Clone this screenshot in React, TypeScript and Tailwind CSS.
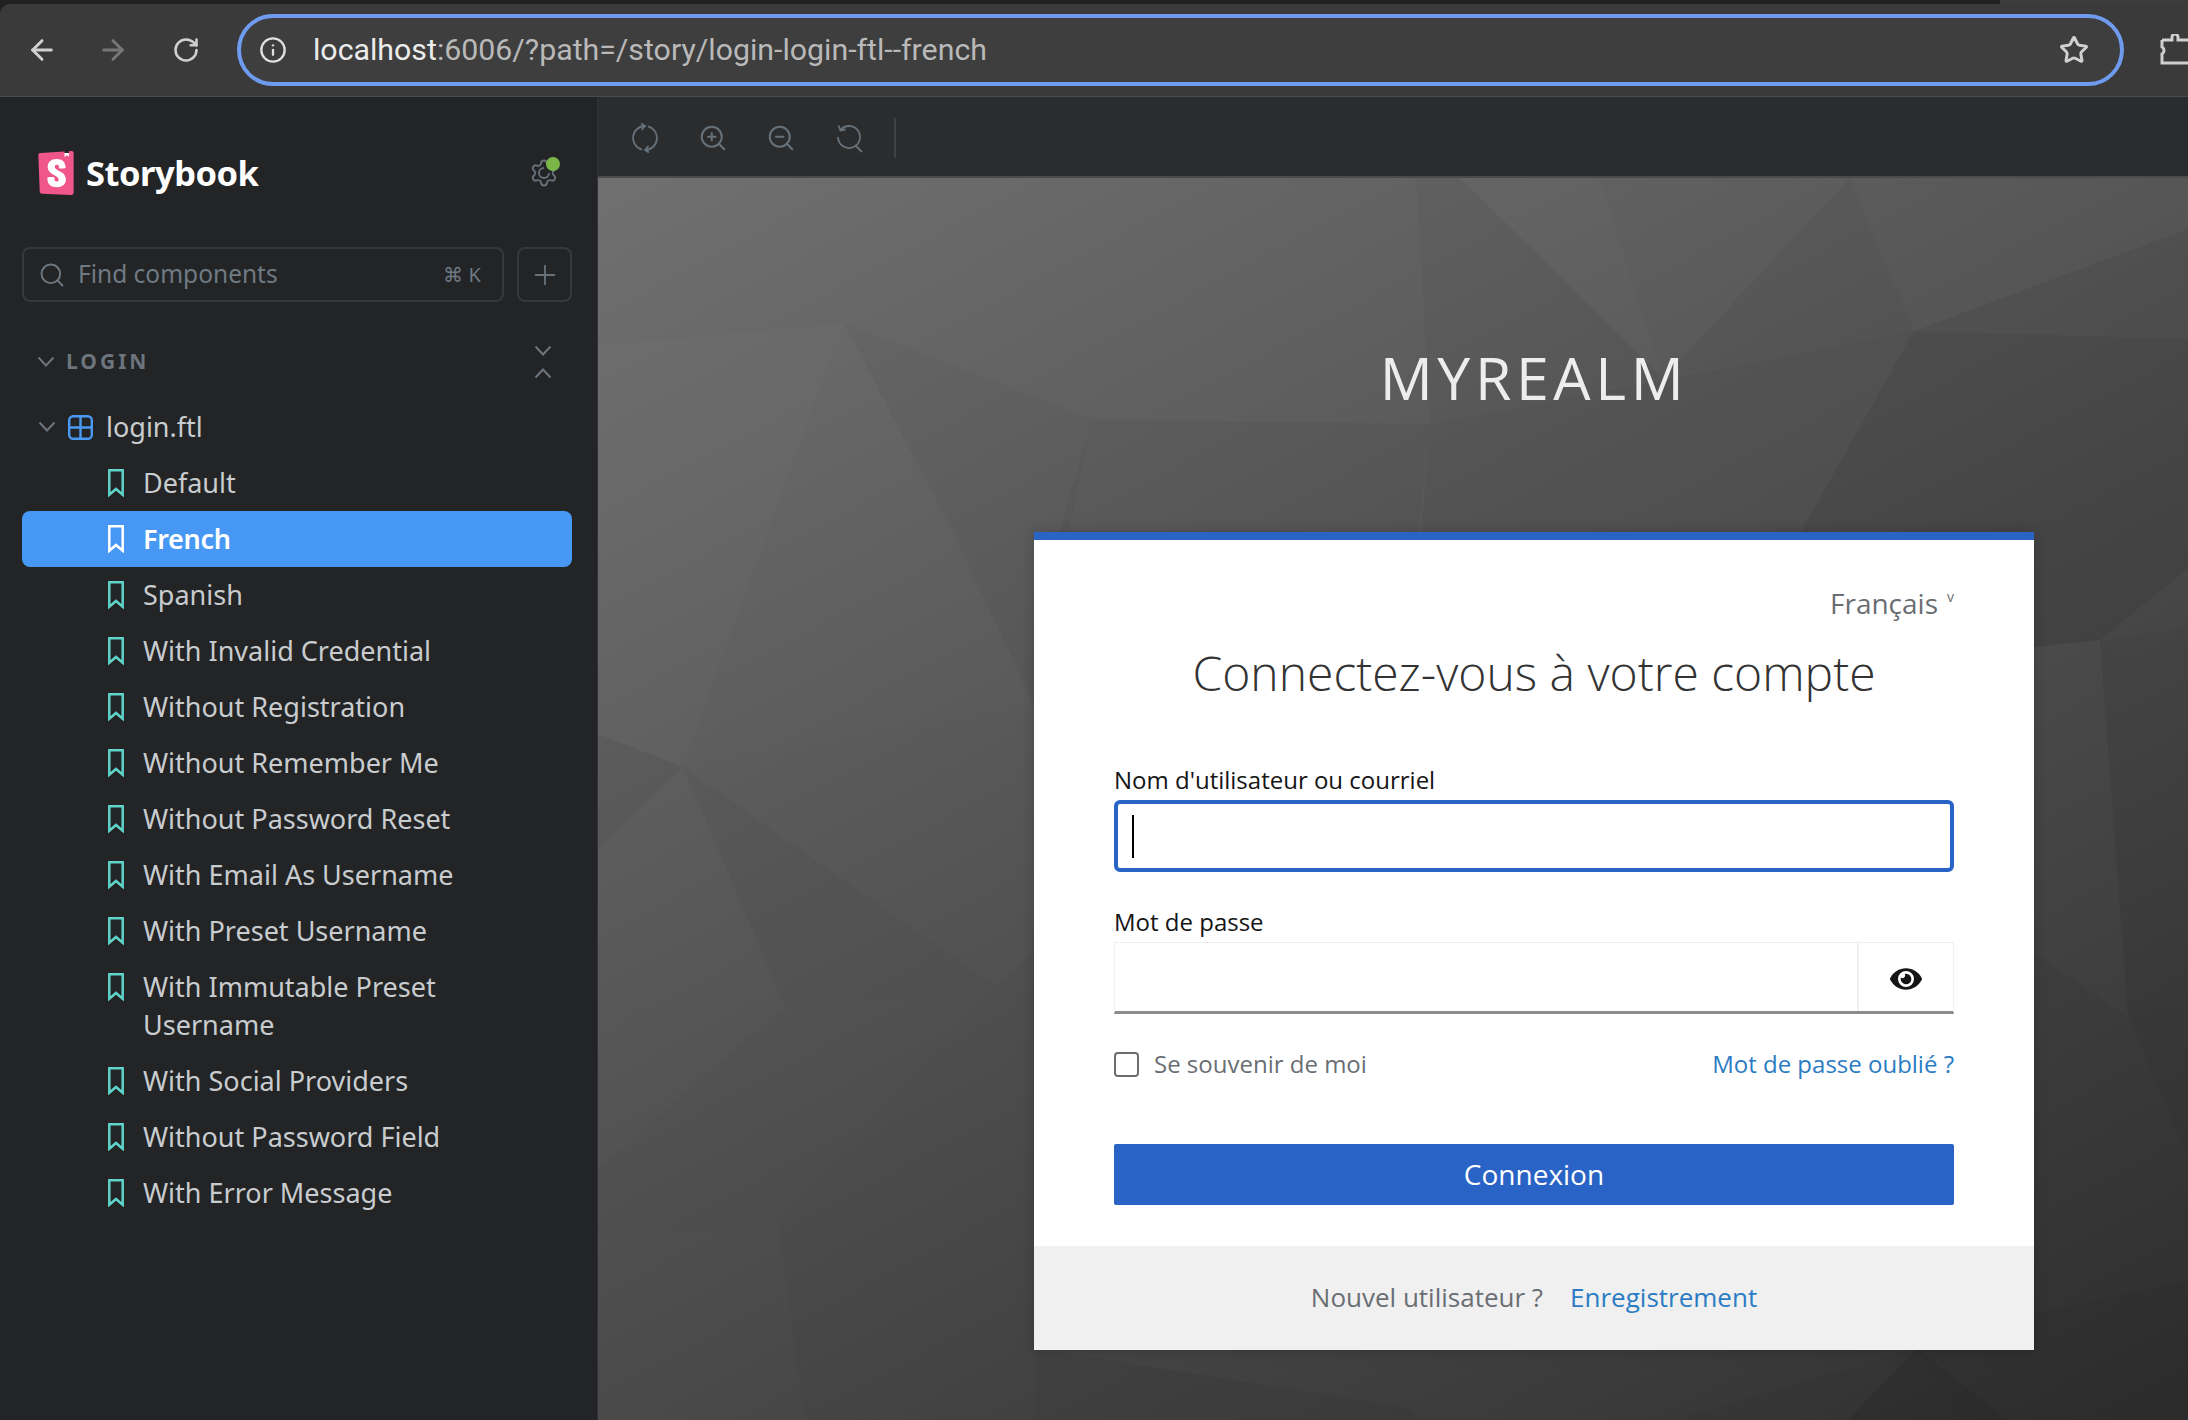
import { ArrowLeft, ArrowRight, Info, Plus, RotateCw, Search, Star, ZoomIn, ZoomOut } from "lucide-react";
import { FaEye } from "react-icons/fa";
import { SiStorybook } from "react-icons/si";

// Facets of the low-poly backdrop: points in page coordinates, then a lightness shift
const facets: [string, number][] = [
  ["598,346 844,323 683,767 598,734", 3],
  ["844,323 953,532 1034,705 683,767", 1],
  ["844,323 1092,419 1034,705 953,532", -2],
  ["1092,419 1430,424 1412,600 1040,600", -3],
  ["1416,178 1460,178 1663,378 1430,424", -2],
  ["1460,178 1600,178 1663,378", 3],
  ["1600,178 1850,178 1663,378", 1],
  ["1850,178 1914,331 1663,378", -2],
  ["1914,331 2188,229 2188,339", -5],
  ["1914,331 2188,339 2188,568 2100,640", -9],
  ["1430,424 1914,331 1740,640 1412,640", -4],
  ["1914,331 2100,640 2034,647 1740,640", -9],
  ["683,767 995,986 785,1006", -2],
  ["598,734 683,767 598,849", -2],
  ["598,849 683,767 785,1006 598,1011", 1],
  ["598,1011 785,1006 598,1169", 1],
  ["598,1169 785,1006 995,986 778,1225 598,1235", -1],
  ["995,986 1034,952 1034,1348 778,1225", -2],
  ["778,1225 1034,1348 1034,1420 805,1420", -2],
  ["2100,640 2188,568 2188,627", -3],
  ["2100,640 2188,627 2188,728", -5],
  ["2100,640 2188,728 2188,1000 2128,1016", -6],
  ["2034,952 2128,1016 2034,1037", -3],
  ["2034,1037 2128,1016 2034,1157", -3],
  ["2128,1016 2188,1000 2188,1157", -7],
  ["2034,1157 2128,1016 2188,1157 2188,1280 2034,1314", -4],
  ["2034,1314 2188,1280 2188,1420 2007,1420 1917,1348", -7],
  ["1034,1348 1409,1408 1420,1420 1034,1420", -4],
  ["1917,1348 1848,1420 1674,1420", -3],
  ["1917,1348 1958,1420 1848,1420", -10],
  ["1917,1348 2007,1420 1958,1420", -12],
];

const stories = [
  "Default",
  "French",
  "Spanish",
  "With Invalid Credential",
  "Without Registration",
  "Without Remember Me",
  "Without Password Reset",
  "With Email As Username",
  "With Preset Username",
  "With Immutable Preset Username",
  "With Social Providers",
  "Without Password Field",
  "With Error Message",
];

function Chevron({ up = false }: { up?: boolean }) {
  return (
    <svg width="18" height="12" viewBox="0 0 18 12" fill="none" stroke="currentColor" strokeWidth="2">
      <path d={up ? "M1.5 10.5 9 2.5l7.5 8" : "M1.5 1.5 9 9.5l7.5-8"} />
    </svg>
  );
}

function BookmarkIcon({ color }: { color: string }) {
  return (
    <svg width="16" height="28" viewBox="0 0 16 28" fill="none" stroke={color} strokeWidth="2.5" className="shrink-0">
      <path d="M1.3 1.3h13.4v24.5L8 20l-6.7 5.8z" />
    </svg>
  );
}

function Backdrop() {
  return (
    <svg className="absolute inset-0 h-full w-full" viewBox="598 178 1590 1242" preserveAspectRatio="none">
      <defs>
        <linearGradient id="wash" gradientUnits="userSpaceOnUse" x1="598" y1="178" x2="1534" y2="1931">
          <stop offset="0" stopColor="#707070" />
          <stop offset="1" stopColor="#2b2b2b" />
        </linearGradient>
      </defs>
      <rect x="598" y="178" width="1590" height="1242" fill="url(#wash)" />
      {facets.map(([points, shift]) => (
        <polygon
          key={points}
          points={points}
          fill={shift > 0 ? "#ffffff" : "#000000"}
          fillOpacity={shift > 0 ? shift / 165 : -shift / 85}
        />
      ))}
    </svg>
  );
}

function BrowserBar() {
  return (
    <div className="bg-[#1f2120]">
      <div className="flex h-[4px] justify-end">
        <div className="w-[188px] bg-[#3c3c3c]" />
      </div>
      <div className="flex h-[93px] items-center overflow-hidden rounded-tl-[10px] border-b border-[#4b4b4b] bg-[#3a3a3a] pl-[26px] text-[#d0d0d0]">
        <ArrowLeft size={32} strokeWidth={2.2} className="shrink-0" />
        <ArrowRight size={32} strokeWidth={2.2} className="ml-[39px] shrink-0 text-[#767676]" />
        <RotateCw size={28} strokeWidth={2.2} className="ml-[43px] shrink-0" />
        <div className="ml-[37px] flex h-[72px] w-[1887px] shrink-0 items-center rounded-full border-[4px] border-[#6f9bef] bg-[#3e3e3e] pl-[18px] pr-[31px]">
          <Info size={28} strokeWidth={2} className="shrink-0 text-[#e0e0e0]" />
          <span className="ml-[26px] text-[30.3px] text-[#b9b9b9] [font-family:Roboto,sans-serif]">
            <span className="text-[#ececec]">localhost</span>:6006/?path=/story/login-login-ftl--french
          </span>
          <Star size={30} strokeWidth={2.4} className="ml-auto shrink-0 text-[#d0d0d0]" />
        </div>
        <svg width="36" height="32" viewBox="0 0 36 32" fill="none" stroke="#cfcfcf" strokeWidth="3" className="ml-[36px] shrink-0">
          <path d="M2 6h10V3a3 3 0 0 1 6 0v3h18M2 6v7a4 4 0 0 1 0 7v9h34" />
        </svg>
      </div>
    </div>
  );
}

function Sidebar() {
  return (
    <aside className="flex w-[598px] shrink-0 flex-col border-r border-[#303235] bg-[#222426] pl-[22px] pr-[25px] [font-family:'Noto_Sans',sans-serif]">
      <div className="flex h-[150px] shrink-0 items-center pl-[16px] pr-[13px] pt-[1px]">
        <div className="relative h-[44px] w-[36px]">
          <div className="absolute inset-x-[3px] inset-y-[2px] bg-white" />
          <SiStorybook size={44} color="#f0568a" className="relative -ml-[4px]" />
        </div>
        <span className="ml-[12px] text-[34.5px] font-bold tracking-[-0.5px] text-white">Storybook</span>
        <div className="relative ml-auto text-[#67717a]">
          <svg width="30" height="30" viewBox="0 0 24 24" fill="none" stroke="currentColor" strokeWidth="1.5">
            <path d="M9.671 4.136a2.34 2.34 0 0 1 4.659 0 2.34 2.34 0 0 0 3.319 1.915 2.34 2.34 0 0 1 2.33 4.033 2.34 2.34 0 0 0 0 3.831 2.34 2.34 0 0 1-2.33 4.033 2.34 2.34 0 0 0-3.319 1.915 2.34 2.34 0 0 1-4.659 0 2.34 2.34 0 0 0-3.32-1.915 2.34 2.34 0 0 1-2.33-4.033 2.34 2.34 0 0 0 0-3.831A2.34 2.34 0 0 1 6.35 6.051a2.34 2.34 0 0 0 3.319-1.915" />
            <path d="M12 8a4 4 0 1 0 4 4" />
          </svg>
          <span className="absolute -right-[1px] -top-[1px] h-[14px] w-[14px] rounded-full bg-[#7ab648]" />
        </div>
      </div>
      <div className="flex gap-[13px]">
        <div className="flex h-[55px] flex-1 items-center rounded-[8px] border-2 border-[#36393c] pl-[14px] pr-[21px] text-[#707a82]">
          <Search size={28} strokeWidth={1.6} />
          <span className="ml-[12px] text-[24.5px]">Find components</span>
          <span className="ml-auto text-[20px]">⌘ K</span>
        </div>
        <div className="flex h-[55px] w-[55px] items-center justify-center rounded-[8px] border-2 border-[#36393c] text-[#67717a]">
          <Plus size={32} strokeWidth={1.4} />
        </div>
      </div>
      <div className="mt-[35px] flex h-[50px] items-center pl-[15px] pr-[20px] text-[#6c757d]">
        <Chevron />
        <span className="ml-[11px] text-[21px] font-bold tracking-[3px]">LOGIN</span>
        <div className="ml-auto flex flex-col gap-[10px]">
          <Chevron />
          <Chevron up />
        </div>
      </div>
      <div className="mt-[20px] flex h-[40px] items-center pl-[16px] text-[#c9ccce]">
        <span className="text-[#6c757d]">
          <Chevron />
        </span>
        <svg width="25" height="25" viewBox="0 0 25 25" fill="none" stroke="#4a9af5" strokeWidth="2.4" className="ml-[12px]">
          <rect x="1.2" y="1.2" width="22.6" height="22.6" rx="4" />
          <path d="M12.5 1v23M1 12.5h23" />
        </svg>
        <span className="ml-[13px] text-[27px]">login.ftl</span>
      </div>
      <ul className="mt-[8px]">
        {stories.map((story) => {
          const selected = story === "French";
          return (
            <li
              key={story}
              className={
                selected
                  ? "flex items-start rounded-[8px] bg-[#4698f4] py-[9px] pl-[86px] pr-[20px] text-[27px] leading-[38px] font-semibold tracking-[-0.3px] text-white"
                  : "flex items-start py-[9px] pl-[86px] pr-[20px] text-[27px] leading-[38px] text-[#c9ccce]"
              }
            >
              <span className="mt-[5px]">
                <BookmarkIcon color={selected ? "#ffffff" : "#5fd3c9"} />
              </span>
              <span className="ml-[19px]">{story}</span>
            </li>
          );
        })}
      </ul>
    </aside>
  );
}

function Toolbar() {
  return (
    <div className="flex h-[81px] shrink-0 items-center gap-[38px] border-b-2 border-[#4b4b4b] bg-[#2b2c2e] pl-[32px] pt-[2px] text-[#67717a]">
      <svg width="30" height="30" viewBox="0 0 30 30" fill="none" stroke="currentColor" strokeWidth="1.8">
        <path d="M12 26.6A12 12 0 0 1 15 3M11 0.5 15 3l-3.500 4M18 3.400A12 12 0 0 1 15 27M19 29.500 15 27l3.500-4" />
      </svg>
      <ZoomIn size={30} strokeWidth={1.6} />
      <ZoomOut size={30} strokeWidth={1.6} />
      <svg width="30" height="30" viewBox="0 0 30 30" fill="none" stroke="currentColor" strokeWidth="1.8">
        <path d="M6.500 7A11 11 0 1 1 4 14M4.500 2.500 6.500 7.500l5-1M21 22l7 7" />
      </svg>
      <div className="-ml-[8px] h-[40px] w-[2px] bg-[#3f4144]" />
    </div>
  );
}

function LoginCard() {
  return (
    <div className="w-[1000px] border-t-[8px] border-[#2a63c6] bg-white shadow-[0_0_12px_rgba(0,0,0,0.2)]">
      <div className="px-[80px]">
        <div className="flex justify-end pt-[44px] text-[28px] leading-[38px] text-[#6a6e73]">
          Français
          <span className="ml-[9px] -mt-[6px] text-[14px]">v</span>
        </div>
        <h1 className="mt-[18px] text-center text-[48px] leading-[66px] font-light text-[#333333]">
          Connectez-vous à votre compte
        </h1>
        <label className="mt-[57px] block text-[24px] leading-[34px] text-[#151515]">Nom d'utilisateur ou courriel</label>
        <div className="mt-[3px] flex h-[72px] items-center rounded-[6px] border-[4px] border-[#2a63c6] pl-[14px]">
          <div className="h-[43px] w-[2px] bg-black" />
        </div>
        <label className="mt-[33px] block text-[24px] leading-[34px] text-[#151515]">Mot de passe</label>
        <div className="mt-[3px] flex h-[72px] border border-b-[3px] border-[#f0f0f0] border-b-[#8a8d90]">
          <div className="flex-1" />
          <div className="flex w-[96px] items-center justify-center border-l-2 border-[#f0f0f0] pt-[3px] text-[#151515]">
            <FaEye size={32} />
          </div>
        </div>
        <div className="mt-[38px] flex h-[25px] items-center text-[24px]">
          <div className="h-[25px] w-[25px] rounded-[4px] border-2 border-[#6a6e73]" />
          <span className="ml-[15px] pb-[2px] text-[#6a6e73]">Se souvenir de moi</span>
          <a className="ml-auto pb-[2px] text-[#2b7cc4]">Mot de passe oublié ?</a>
        </div>
        <button className="mt-[67px] block h-[61px] w-full rounded-[2px] bg-[#2a63c6] pb-[2px] text-[28px] text-white">
          Connexion
        </button>
      </div>
      <div className="mt-[41px] flex h-[104px] items-center justify-center gap-[27px] bg-[#f0f0f0] pb-[2px] text-[26px]">
        <span className="text-[#6a6e73]">Nouvel utilisateur ?</span>
        <a className="text-[#2b7cc4]">Enregistrement</a>
      </div>
    </div>
  );
}

export default function App() {
  return (
    <div className="flex h-[1420px] w-[2188px] flex-col overflow-hidden bg-[#222426]">
      <BrowserBar />
      <div className="flex min-h-0 flex-1">
        <Sidebar />
        <main className="flex min-w-0 flex-1 flex-col">
          <Toolbar />
          <section className="relative min-h-0 flex-1 overflow-hidden">
            <Backdrop />
            <div className="relative flex w-[1872px] flex-col items-center [font-family:'Open_Sans',sans-serif]">
              <div className="mt-[159px] text-[59px] leading-[80px] font-normal tracking-[4.6px] text-[#ededed]">MYREALM</div>
              <div className="mt-[115px]">
                <LoginCard />
              </div>
            </div>
          </section>
        </main>
      </div>
    </div>
  );
}
